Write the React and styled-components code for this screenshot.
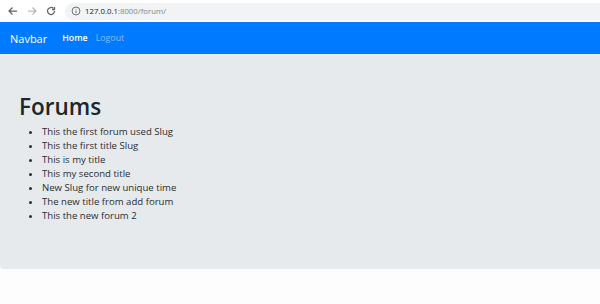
import React from 'react'
import styled, { createGlobalStyle } from 'styled-components'

const GlobalStyle = createGlobalStyle`
  html, body {
    margin: 0;
    padding: 0;
    background: #fdfdfe;
    font-family: "Open Sans", "Noto Sans", sans-serif;
  }
`

const forums = [
  'This the first forum used Slug',
  'This the first title Slug',
  'This is my title',
  'This my second title',
  'New Slug for new unique time',
  'The new title from add forum',
  'This the new forum 2',
]

const Chrome = styled.div`
  height: 22px;
  background: #fff;
  display: flex;
  align-items: center;
  padding-left: 7px;
`

const NavIcon = styled.button`
  width: 12px;
  height: 16px;
  padding: 0;
  border: 0;
  background: none;
  display: flex;
  align-items: center;
  justify-content: center;
  color: ${p => (p.$dim ? '#b8babd' : '#5f6368')};
  margin-right: 7px;
`

const UrlBar = styled.div`
  flex: 1;
  height: 17px;
  margin-left: 1px;
  background: #f1f3f4;
  border-radius: 9px 0 0 9px;
  display: flex;
  align-items: center;
  padding-left: 6px;
  gap: 4px;
  font-size: 7.8px;
  font-weight: 500;
  color: #202124;
`

const Port = styled.span`
  color: #80868b;
  font-weight: 400;
`

const Navbar = styled.nav`
  height: 32px;
  background: #007bff;
  display: flex;
  align-items: center;
  padding: 0 10px;
  border-bottom: 1px solid #e7ecf4;
`

const Brand = styled.a`
  color: #fff;
  font-size: 11px;
  margin-right: 15px;
  text-decoration: none;
`

const NavLink = styled.a`
  color: ${p => (p.$active ? '#fff' : 'rgba(255,255,255,0.5)')};
  font-weight: ${p => (p.$active ? 600 : 400)};
  font-size: 8.8px;
  margin-right: 8px;
  text-decoration: none;
`

const Jumbotron = styled.div`
  height: 214px;
  box-sizing: border-box;
  background: #e6eaec;
  border-radius: 0 0 0 4px;
  padding: 37px 19px 0;
  color: #212529;
`

const Title = styled.h1`
  margin: 0 0 3px;
  font-size: 22.5px;
  font-weight: 600;
  line-height: 30px;
`

const List = styled.ul`
  margin: 0;
  padding-left: 23px;
  font-size: 9.6px;
  font-weight: 500;
  line-height: 14px;
  color: #2a2d31;
`

export default function App() {
  return (
    <>
      <GlobalStyle />
      <Chrome>
        <NavIcon>
          <svg width="12" height="12" viewBox="0 0 24 24" fill="none" stroke="currentColor" strokeWidth="2.5">
            <path d="M20 12H5M11 5l-7 7 7 7" />
          </svg>
        </NavIcon>
        <NavIcon $dim>
          <svg width="12" height="12" viewBox="0 0 24 24" fill="none" stroke="currentColor" strokeWidth="2.5">
            <path d="M4 12h15M13 5l7 7-7 7" />
          </svg>
        </NavIcon>
        <NavIcon>
          <svg width="12" height="12" viewBox="0 0 24 24" fill="none" stroke="currentColor" strokeWidth="2.5">
            <path d="M19 12a7 7 0 1 1-2.05-4.95" />
            <path d="M19 4v5h-5" />
          </svg>
        </NavIcon>
        <UrlBar>
          <svg width="10" height="10" viewBox="0 0 24 24" fill="none" stroke="#5f6368" strokeWidth="2.2">
            <circle cx="12" cy="12" r="9.5" />
            <path d="M12 11v6M12 7v1.5" />
          </svg>
          <span>
            127.0.0.1<Port>:8000/forum/</Port>
          </span>
        </UrlBar>
      </Chrome>
      <Navbar>
        <Brand href="#">Navbar</Brand>
        <NavLink $active href="#">Home</NavLink>
        <NavLink href="#">Logout</NavLink>
      </Navbar>
      <Jumbotron>
        <Title>Forums</Title>
        <List>
          {forums.map(f => (
            <li key={f}>{f}</li>
          ))}
        </List>
      </Jumbotron>
    </>
  )
}
